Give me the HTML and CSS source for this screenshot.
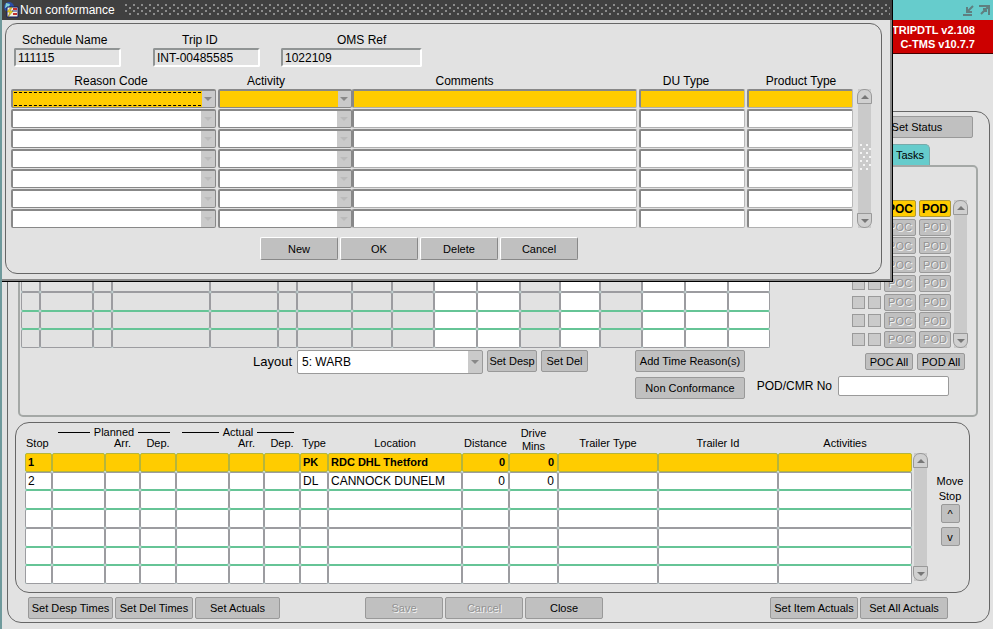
FILE: index.html
```html
<!DOCTYPE html>
<html lang="en">
<head>
    <meta charset="UTF-8">
    <meta name="viewport" content="width=device-width, initial-scale=1.0">
    <title>Trip Details - C-TMS</title>
    <link rel="stylesheet" href="styles.css">
</head>
<body>
    <div class="app">
        <div class="app-bar">
            <svg width="11" height="11" viewBox="0 0 11 11"><path d="M10 1L5 6M4 2v5h5M0 10h9" fill="none" stroke="#5f7f80" stroke-width="2"/></svg>
            <svg width="11" height="11" viewBox="0 0 11 11"><path d="M0 1h10v9M9 2L2 9M4 4h3v3" fill="none" stroke="#5f7f80" stroke-width="2"/></svg>
        </div>
        <div class="version">TRIPDTL v2.108<br>C-TMS v10.7.7</div>

        <main class="main-panel">
            <div class="status-row">
                <button type="button" class="btn btn-status">Set Status</button>
            </div>
            <div class="tab-row">
                <button type="button" class="tab">Tasks</button>
            </div>

            <section class="tab-panel">
                <div class="trip-area">
                    <table class="grid trip-grid">
                        <colgroup id="tripCols"></colgroup>
                        <tbody id="tripRows"></tbody>
                    </table>
                    <div class="pod-area">
                        <div class="pod-list" id="podList"></div>
                        <div class="scroll"><button type="button" class="up" aria-label="Up"></button><button type="button" class="down" aria-label="Down"></button></div>
                    </div>
                </div>
                <div class="controls">
                    <div class="layout-box">
                        <label for="layout">Layout</label>
                        <span class="drop drop-layout">
                            <select id="layout"><option>5: WARB</option></select>
                        </span>
                        <button type="button" class="btn btn-desp">Set Desp</button>
                        <button type="button" class="btn btn-del">Set Del</button>
                    </div>
                    <div class="reasons">
                        <button type="button" class="btn">Add Time Reason(s)</button>
                        <button type="button" class="btn">Non Conformance</button>
                    </div>
                    <div class="pod-controls">
                        <div class="pod-all">
                            <button type="button" class="btn">POC All</button>
                            <button type="button" class="btn">POD All</button>
                        </div>
                        <div class="cmr">
                            <label for="cmr">POD/CMR No</label>
                            <input type="text" id="cmr">
                        </div>
                    </div>
                </div>
            </section>

            <section class="stops-panel">
                <table class="grid stops-grid">
                    <colgroup id="stopCols"></colgroup>
                    <thead>
                        <tr class="groups">
                            <th rowspan="2" class="left">Stop</th>
                            <th colspan="3"><span class="group">Planned</span></th>
                            <th colspan="3"><span class="group">Actual</span></th>
                            <th rowspan="2">Type</th>
                            <th rowspan="2">Location</th>
                            <th rowspan="2">Distance</th>
                            <th rowspan="2" class="drive">Drive<br>Mins</th>
                            <th rowspan="2">Trailer Type</th>
                            <th rowspan="2">Trailer Id</th>
                            <th rowspan="2">Activities</th>
                        </tr>
                        <tr>
                            <th></th>
                            <th>Arr.</th>
                            <th>Dep.</th>
                            <th></th>
                            <th>Arr.</th>
                            <th>Dep.</th>
                        </tr>
                    </thead>
                    <tbody id="stopRows"></tbody>
                </table>
                <div class="scroll stops-scroll"><button type="button" class="up" aria-label="Up"></button><button type="button" class="down" aria-label="Down"></button></div>
                <div class="move">
                    <span>Move<br>Stop</span>
                    <button type="button" class="btn">^</button>
                    <button type="button" class="btn">v</button>
                </div>
            </section>

            <div class="footer">
                <div class="btn-group">
                    <button type="button" class="btn w85">Set Desp Times</button>
                    <button type="button" class="btn w78">Set Del Times</button>
                    <button type="button" class="btn w85">Set Actuals</button>
                </div>
                <div class="btn-group middle">
                    <button type="button" class="btn w78" disabled>Save</button>
                    <button type="button" class="btn w78" disabled>Cancel</button>
                    <button type="button" class="btn w78">Close</button>
                </div>
                <div class="btn-group right">
                    <button type="button" class="btn w88">Set Item Actuals</button>
                    <button type="button" class="btn w88">Set All Actuals</button>
                </div>
            </div>
        </main>
    </div>

    <div class="dialog" role="dialog" aria-labelledby="dialogTitle">
        <div class="dialog-bar">
            <svg width="16" height="16" viewBox="0 0 16 16">
                <circle cx="6" cy="5" r="5" fill="#2b4fa8"/>
                <path d="M3 1l4 1-1 3-4 1z" fill="#7fd0d8"/>
                <path d="M4 5h11v10H4z" fill="#f4f0e0" stroke="#111a66"/>
                <path d="M10 7h4M10 12h4" stroke="#c03030" stroke-width="2"/>
                <path d="M9 9h5" stroke="#203090"/>
                <path d="M8 5L4 10h3l-2 5 5-6H7l2-4z" fill="#ffe020" stroke="#6b6010" stroke-width=".5"/>
            </svg>
            <span id="dialogTitle">Non conformance</span>
            <span class="grip"></span>
        </div>
        <div class="dialog-panel">
            <div class="fields">
                <div class="field schedule">
                    <label for="schedule">Schedule Name</label>
                    <input type="text" id="schedule" value="111115" readonly>
                </div>
                <div class="field trip">
                    <label for="trip">Trip ID</label>
                    <input type="text" id="trip" value="INT-00485585" readonly>
                </div>
                <div class="field oms">
                    <label for="oms">OMS Ref</label>
                    <input type="text" id="oms" value="1022109" readonly>
                </div>
            </div>
            <div class="reason-area">
                <table class="reason-grid">
                    <thead>
                        <tr>
                            <th class="c-reason">Reason Code</th>
                            <th class="c-activity">Activity</th>
                            <th class="c-comments">Comments</th>
                            <th class="c-du">DU Type</th>
                            <th class="c-product">Product Type</th>
                        </tr>
                    </thead>
                    <tbody id="reasonRows"></tbody>
                </table>
                <div class="scroll dialog-scroll"><button type="button" class="up" aria-label="Up"></button><span class="dots"></span><button type="button" class="down" aria-label="Down"></button></div>
            </div>
            <div class="dialog-buttons">
                <button type="button">New</button>
                <button type="button">OK</button>
                <button type="button">Delete</button>
                <button type="button">Cancel</button>
            </div>
        </div>
    </div>

    <script src="script.js"></script>
</body>
</html>
```
FILE: styles.css
```css
* {
    box-sizing: border-box;
}
body {
    margin: 0;
    font-family: "Liberation Sans", Arial, sans-serif;
    font-size: 12px;
    color: #000;
    background: #e2e2e2;
}
button, input, select {
    font-family: inherit;
    font-size: 11px;
    color: #000;
    margin: 0;
    padding: 0;
    border-radius: 2px;
}
th {
    font-weight: normal;
}
.app {
    min-height: 100vh;
    border-left: 2px solid #6f9a9c;
    background: #e2e2e2;
}
.app-bar {
    display: flex;
    justify-content: flex-end;
    align-items: center;
    gap: 5px;
    height: 20px;
    padding-right: 3px;
    background: #66cccc;
}
.version {
    height: 34px;
    padding: 3px 18px 0 0;
    border-bottom: 1px solid #400;
    background: #cc0000;
    color: #fff;
    font-size: 11px;
    font-weight: bold;
    line-height: 14px;
    text-align: right;
}

/* Main window */
.main-panel {
    margin: 57px 3px 5px 5px;
    padding: 4px 0 3px;
    border: 1px solid #666;
    border-radius: 14px;
}
.status-row {
    display: flex;
    justify-content: flex-end;
    padding-right: 16px;
}
.tab-row {
    display: flex;
    justify-content: flex-end;
    margin-top: 6px;
    padding-right: 59px;
}
.tab {
    width: 48px;
    height: 21px;
    padding-left: 8px;
    border: 1px solid #7aa;
    border-bottom: none;
    border-radius: 3px 5px 0 0;
    background: #66cccc;
}
.btn {
    height: 22px;
    border: 1px solid #999;
    background: #c0c0c0;
    white-space: nowrap;
}
.btn:disabled {
    color: #929292;
    text-shadow: 1px 1px 0 #f4f4f4;
}
.btn-status {
    width: 112px;
}
.tab-panel {
    height: 252px;
    margin: 0 11px 0 10px;
    padding: 32px 0 0 1px;
    border: 2px solid #a4a8a6;
    border-radius: 5px;
}

/* Record grids */
.grid {
    border-collapse: separate;
    border-spacing: 0;
    table-layout: fixed;
}
.grid tbody {
    background: #aef0ee;
}
.grid td {
    padding: 0 3px 0 2px;
    border: 1px solid #9c9ca0;
    border-radius: 2px;
    background: #fff;
    overflow: hidden;
    white-space: nowrap;
    line-height: 16px;
}
.grid td.gray {
    background: #e2e2e2;
}
.grid td.num {
    text-align: right;
}
.grid tr.line-top td {
    border-top-color: #66c496;
}
.grid tr.line-bottom td {
    border-bottom-color: #66c496;
}
.grid tr.current td {
    border-color: #b5b53c;
    background: #ffcc00;
    font-size: 11px;
    font-weight: bold;
}
.trip-area {
    display: flex;
    justify-content: space-between;
    height: 149px;
}
.trip-grid {
    width: 749px;
    height: 149px;
}
.pod-area {
    display: flex;
    gap: 2px;
    padding: 1px 8px 0 0;
}
.pod-list {
    display: flex;
    flex-direction: column;
    justify-content: space-between;
}
.pod-row {
    display: flex;
    align-items: center;
    gap: 3px;
}
.pod-row input {
    appearance: none;
    width: 13px;
    height: 13px;
    border: 1px solid #9a9a9a;
    border-radius: 0;
    background: #cacaca;
}
.pod-row .btn {
    width: 32px;
    height: 17px;
}
.pod-row .btn.current {
    border-color: #b09a30;
    background: #ffcc00;
    font-size: 12px;
    font-weight: bold;
}

/* Scroll bars */
.scroll {
    display: flex;
    flex-direction: column;
    justify-content: space-between;
    align-items: center;
    width: 15px;
    background: linear-gradient(to right, #e2e2e2 1px, #cacaca 1px, #cacaca 14px, #e2e2e2 14px);
}
.scroll button {
    display: flex;
    justify-content: center;
    align-items: center;
    width: 15px;
    height: 15px;
    border: 1px solid #999;
    background: #d0d0d0;
}
.scroll .up {
    border-radius: 7px 7px 0 0;
}
.scroll .down {
    border-radius: 0 0 7px 7px;
}
.scroll button::before {
    content: "";
    border: 4px solid transparent;
}
.scroll .up::before {
    border-top: none;
    border-bottom-color: #777;
}
.scroll .down::before {
    border-bottom: none;
    border-top-color: #777;
}

/* Controls under the trip grid */
.controls {
    display: flex;
    margin-top: 2px;
}
.layout-box {
    display: flex;
    align-items: flex-start;
    gap: 4px;
    padding-left: 232px;
}
.layout-box label {
    width: 40px;
    font-size: 13px;
    line-height: 24px;
}
.drop {
    position: relative;
    display: block;
}
.drop select {
    display: block;
    appearance: none;
    width: 100%;
    height: 100%;
    padding-left: 4px;
    border: 1px solid #9a9a9a;
    background: linear-gradient(to left, #cacaca 14px, #fff 14px);
}
.drop::after {
    content: "";
    position: absolute;
    top: 50%;
    right: 4px;
    margin-top: -2px;
    border: 4px solid transparent;
    border-top-color: #888;
    border-bottom: none;
    pointer-events: none;
}
.drop-layout {
    width: 186px;
    height: 24px;
}
.drop-layout select {
    font-size: 12px;
}
.btn-desp {
    width: 50px;
}
.btn-del {
    width: 47px;
}
.reasons {
    display: flex;
    flex-direction: column;
    gap: 5px;
    margin-left: 47px;
}
.reasons .btn {
    width: 110px;
}
.pod-controls {
    margin: 3px 0 0 auto;
}
.pod-all {
    display: flex;
    justify-content: flex-end;
    gap: 4px;
    padding-right: 11px;
}
.pod-all .btn {
    width: 48px;
    height: 17px;
}
.cmr {
    display: flex;
    align-items: center;
    gap: 6px;
    margin-top: 6px;
    padding-right: 27px;
}
.cmr input {
    width: 111px;
    height: 20px;
    border: 1px solid #9a9a9a;
    background: #fff;
}

/* Stops */
.stops-panel {
    display: flex;
    align-items: flex-start;
    height: 171px;
    margin: 5px 19px 0 7px;
    padding: 4px 0 0 9px;
    border: 1px solid #666;
    border-radius: 14px;
}
.stops-grid {
    flex: 1;
    width: 0;
    height: 157px;
}
.stops-grid th {
    height: 16px;
    padding: 0 0 4px;
    font-size: 11px;
    line-height: 12px;
    vertical-align: bottom;
    white-space: nowrap;
}
.stops-grid .groups th[colspan] {
    height: 10px;
    padding: 0 6px;
    line-height: 10px;
}
.stops-grid th.left {
    padding-left: 1px;
    text-align: left;
}
.stops-grid th.drive {
    padding: 0;
    line-height: 13px;
}
.group {
    display: flex;
    align-items: center;
    gap: 4px;
}
.group::before, .group::after {
    content: "";
    flex: 1;
    border-top: 1px solid #000;
}
.stops-scroll {
    height: 128px;
    margin: 26px 0 0 1px;
}
.move {
    width: 38px;
    margin: 47px 0 0 3px;
    font-size: 11px;
    line-height: 15px;
    text-align: center;
}
.move span {
    display: block;
}
.move .btn {
    display: block;
    width: 19px;
    height: 19px;
    margin: 0 auto 4px;
}
.footer {
    display: flex;
    margin: 4px 41px 0 20px;
}
.btn-group {
    display: flex;
    gap: 2px;
}
.middle {
    margin-left: 85px;
}
.right {
    margin-left: auto;
}
.w78 {
    width: 78px;
}
.w85 {
    width: 85px;
}
.w88 {
    width: 88px;
}

/* Non conformance dialog */
.dialog {
    position: absolute;
    top: 0;
    left: 2px;
    width: 891px;
    border-right: 1px solid #000;
    border-bottom: 1px solid #000;
    background: #e2e2e2;
    box-shadow: inset -2px -2px 0 #888;
}
.dialog-bar {
    display: flex;
    align-items: center;
    height: 20px;
    padding: 0 2px 0 1px;
    background: #404040;
    color: #fff;
}
.dialog-bar svg {
    margin-right: 1px;
}
.grip {
    flex: 1;
    height: 12px;
    margin-left: 10px;
    background:
        radial-gradient(circle at 1px 1px, #8c8c8c 1px, transparent 1px) 0 0 / 8px 6px,
        radial-gradient(circle at 1px 1px, #8c8c8c 1px, transparent 1px) 4px 3px / 8px 6px;
}
.dialog-panel {
    margin: 3px 10px 7px 3px;
    padding: 8px 7px 13px 8px;
    border: 1px solid #666;
    border-radius: 12px;
}
.fields {
    display: flex;
}
.field label {
    display: block;
    height: 16px;
    line-height: 16px;
    white-space: nowrap;
}
.field input {
    display: block;
    width: 100%;
    height: 19px;
    padding: 0 2px;
    border: 2px solid;
    border-color: #909494 #fff #fff #909494;
    background: #e2e2e2;
    font-size: 12px;
}
.schedule {
    width: 107px;
}
.schedule label {
    padding-left: 8px;
}
.trip {
    width: 107px;
    margin-left: 32px;
}
.trip label {
    padding-left: 29px;
}
.oms {
    width: 141px;
    margin-left: 21px;
}
.oms label {
    padding-left: 56px;
}
.reason-area {
    display: flex;
    align-items: flex-end;
    margin: 6px 0 0 -3px;
}
.reason-grid {
    flex: 1;
    border-collapse: collapse;
    table-layout: fixed;
}
.reason-grid th {
    height: 16px;
    padding: 0;
    line-height: 16px;
}
.reason-grid td {
    height: 20px;
    padding: 0 2px 1px 0;
}
.reason-grid .c-reason {
    width: 207px;
    padding-right: 7px;
}
.reason-grid .c-activity {
    width: 134px;
    padding-right: 38px;
}
.reason-grid .c-comments {
    padding-right: 62px;
}
.reason-grid .c-du {
    width: 108px;
    padding-right: 14px;
}
.reason-grid .c-product {
    width: 108px;
}
.reason-grid input, .reason-grid select {
    display: block;
    width: 100%;
    height: 19px;
    border: 2px solid;
    border-color: #888 #b8b8b8 #b0b0b0 #888;
    border-width: 2px 1px 1px 2px;
    background-color: #fff;
}
.reason-grid td.flush {
    padding-right: 0;
}
.reason-grid .drop select {
    border-color: #888;
}
.reason-grid .drop::after {
    border-top-color: #bbb;
}
.reason-grid .current .drop::after {
    border-top-color: #888;
}
.reason-grid .current input {
    background: #ffcc00;
}
.reason-grid .current select {
    background: linear-gradient(to left, #cacaca 13px, #ffcc00 13px);
}
.reason-grid .focused::before {
    content: "";
    position: absolute;
    top: 3px;
    right: 15px;
    bottom: 2px;
    left: 3px;
    border: 1px dashed #000;
    border-width: 1px 0;
    pointer-events: none;
}
.dialog-scroll {
    height: 139px;
    margin: 0 2px 1px 2px;
}
.dots {
    width: 12px;
    height: 28px;
    margin-bottom: 4px;
    background:
        radial-gradient(circle at 2px 2px, #f4f4f4 1px, transparent 1px) 0 0 / 6px 8px,
        radial-gradient(circle at 2px 2px, #f4f4f4 1px, transparent 1px) 3px 4px / 6px 8px;
}
.dialog-buttons {
    display: flex;
    justify-content: center;
    gap: 2px;
    margin-top: 8px;
    padding-right: 50px;
}
.dialog-buttons button {
    width: 78px;
    height: 23px;
    border: 1px solid;
    border-color: #fff #888 #888 #fff;
    background: #c0c0c0;
}
```
FILE: script.js
```js
// Column widths of the two record grids
const tripCols = [19, 53, 19, 98, 68, 19, 55, 40, 42, 43, 43, 40, 40, 42, 43, 43, 42];
const tripWhite = [9, 10, 12, 14, 15, 16];
const stopCols = [27, 53, 35, 36, 53, 35, 36, 28, 134, 47, 49, 100, 120, 0];

const stops = [
    ['1', '', '', '', '', '', '', 'PK', 'RDC DHL Thetford', '0', '0', '', '', ''],
    ['2', '', '', '', '', '', '', 'DL', 'CANNOCK DUNELM', '0', '0', '', '', '']
];

function createCols(id, widths) {
    document.getElementById(id).innerHTML = widths
        .map(w => w ? `<col style="width: ${w}px">` : '<col>').join('');
}

// Green separators, with a gray one every third line
function lineClass(i, gray) {
    const top = gray.includes(i - 1) ? '' : 'line-top';
    const bottom = gray.includes(i) ? '' : 'line-bottom';
    return `${top} ${bottom}`;
}

createCols('tripCols', tripCols);
createCols('stopCols', stopCols);

let html = '';
for (let i = 0; i < 8; i++) {
    html += `<tr class="${lineClass(i, [-1, 1, 4, 7])}">`;
    tripCols.forEach((w, c) => {
        html += `<td class="${tripWhite.includes(c) ? '' : 'gray'}">&nbsp;</td>`;
    });
    html += '</tr>';
}
document.getElementById('tripRows').innerHTML = html;

html = '';
for (let i = 0; i < 7; i++) {
    const stop = stops[i] || [];
    html += `<tr class="${i === 0 ? 'current' : lineClass(i, [0, 3, 6])}">`;
    stopCols.forEach((w, c) => {
        html += `<td class="${c === 9 || c === 10 ? 'num' : ''}">${stop[c] || '&nbsp;'}</td>`;
    });
    html += '</tr>';
}
document.getElementById('stopRows').innerHTML = html;

html = '';
for (let i = 0; i < 8; i++) {
    const attrs = i === 0 ? 'class="btn current"' : 'class="btn" disabled';
    html += `<div class="pod-row">
        <input type="checkbox" aria-label="POC ${i + 1}" disabled>
        <input type="checkbox" aria-label="POD ${i + 1}" disabled>
        <button type="button" ${attrs}>POC</button>
        <button type="button" ${attrs}>POD</button>
    </div>`;
}
document.getElementById('podList').innerHTML = html;

html = '';
for (let i = 0; i < 7; i++) {
    html += `<tr class="${i === 0 ? 'current' : ''}">
        <td><span class="drop ${i === 0 ? 'focused' : ''}"><select aria-label="Reason Code"><option></option></select></span></td>
        <td class="flush"><span class="drop"><select aria-label="Activity"><option></option></select></span></td>
        <td><input type="text" aria-label="Comments"></td>
        <td><input type="text" aria-label="DU Type"></td>
        <td><input type="text" aria-label="Product Type"></td>
    </tr>`;
}
document.getElementById('reasonRows').innerHTML = html;
```
